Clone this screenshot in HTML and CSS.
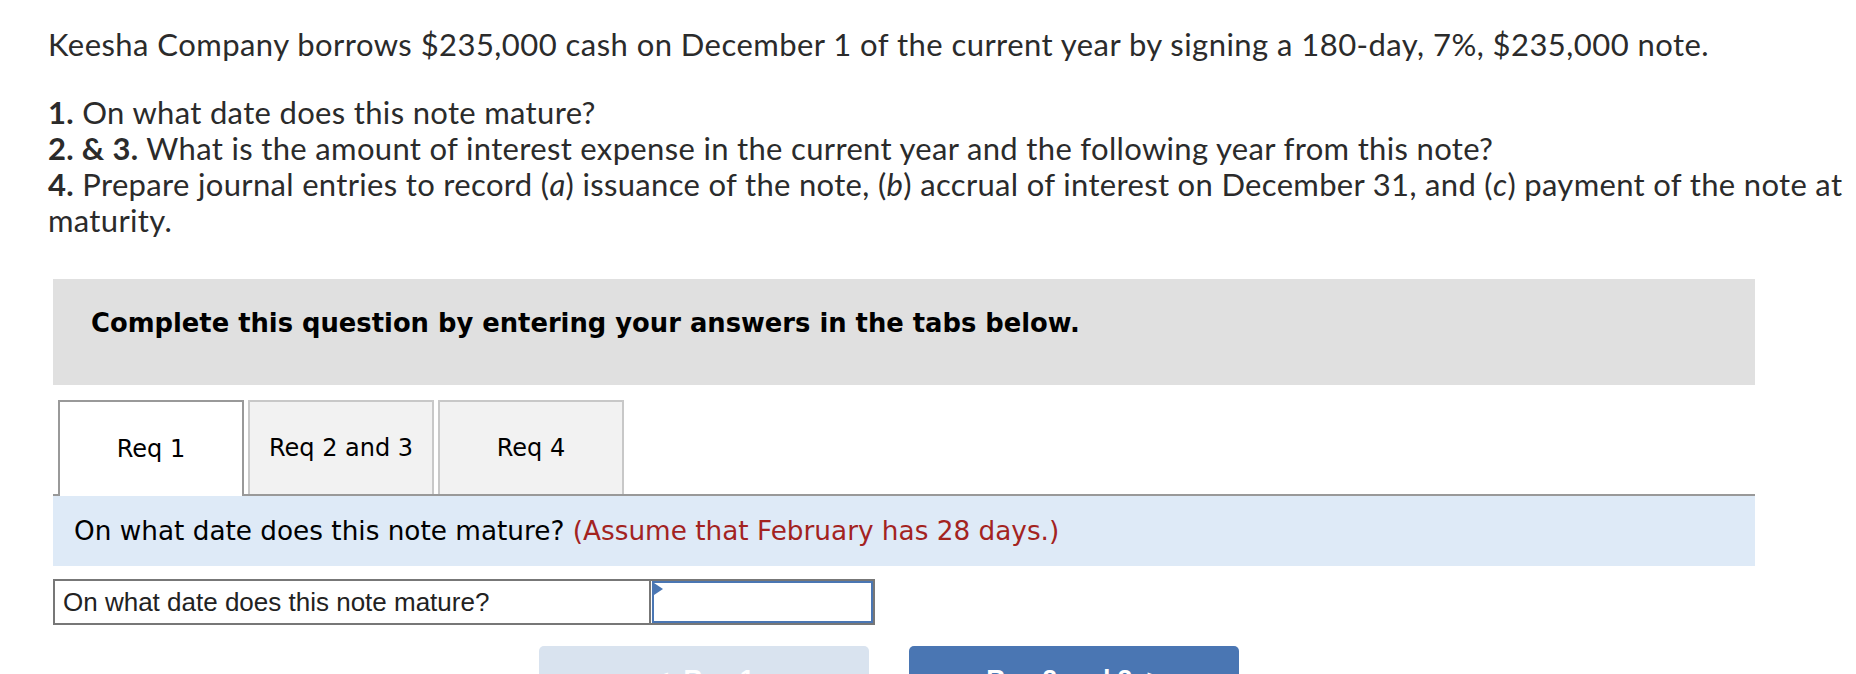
FILE: index.html
```html
<!DOCTYPE html>
<html>
<head>
<meta charset="utf-8">
<link rel="stylesheet" href="styles.css">
</head>
<body>
<div class="page">
  <div class="intro">
    <p class="lead">Keesha Company borrows $235,000 cash on December 1 of the current year by signing a 180-day, 7%, $235,000 note.</p>
    <p class="reqs"><b>1.</b> On what date does this note mature?<br><b>2. &amp; 3.</b> What is the amount of interest expense in the current year and the following year from this note?<br><b>4.</b> Prepare journal entries to record (<i>a</i>) issuance of the note, (<i>b</i>) accrual of interest on December 31, and (<i>c</i>) payment of the note at<br>maturity.</p>
  </div>
  <div class="widget">
    <div class="banner">Complete this question by entering your answers in the tabs below.</div>
    <div class="tabs">
      <div class="tab active">Req 1</div>
      <div class="tab">Req 2 and 3</div>
      <div class="tab">Req 4</div>
    </div>
    <div class="instr">On what date does this note mature? <span class="note">(Assume that February has 28 days.)</span></div>
    <div class="answer">
      <div class="label">On what date does this note mature?</div>
      <div class="input"><span class="marker"></span></div>
    </div>
    <div class="nav">
      <div class="btn prev">&lt;&nbsp;&nbsp;Req 1</div>
      <div class="btn next">Req 2 and 3&nbsp;&nbsp;&gt;</div>
    </div>
  </div>
</div>
</body>
</html>
```
FILE: styles.css
```css
html, body {
  margin: 0;
  padding: 0;
  background: #fff;
}
.page {
  overflow: hidden;
  height: 674px;
}
.intro {
  padding: 26px 0 0 48px;
  font-family: Lato, "Open Sans", sans-serif;
  font-size: 31px;
  letter-spacing: 0.45px;
  line-height: 36px;
  color: #2b2b2b;
  white-space: nowrap;
}
.intro p {
  margin: 0;
}
.intro .reqs {
  margin-top: 32px;
  letter-spacing: 0.33px;
}
.intro b {
  font-weight: 700;
}
.widget {
  margin: 41px 0 0 53px;
  width: 1702px;
}
.banner {
  box-sizing: border-box;
  height: 106px;
  background: #e0e0e0;
  padding: 28px 0 0 38px;
  font-family: "DejaVu Sans", Verdana, sans-serif;
  font-weight: bold;
  font-size: 25.8px;
  line-height: 32px;
  color: #000;
}
.tabs {
  display: flex;
  gap: 4px;
  padding-left: 5px;
  margin-top: 15px;
  border-bottom: 2px solid #999;
  height: 94px;
}
.tab {
  box-sizing: border-box;
  width: 186px;
  height: 94px;
  border: 2px solid #c8c8c8;
  border-bottom: none;
  background: #f2f2f2;
  display: flex;
  align-items: center;
  justify-content: center;
  font-family: "DejaVu Sans", Verdana, sans-serif;
  font-size: 24px;
  color: #000;
}
.tab.active {
  background: #fff;
  border-color: #999;
  height: 96px;
  position: relative;
  z-index: 1;
}
.instr {
  box-sizing: border-box;
  height: 70px;
  background: #deeaf7;
  padding-left: 21px;
  display: flex;
  align-items: center;
  font-family: "DejaVu Sans", Verdana, sans-serif;
  font-size: 26.3px;
  color: #000;
  white-space: pre;
}
.instr .note {
  color: #a3231f;
}
.answer {
  display: flex;
  margin-top: 13px;
  width: 822px;
  height: 46px;
  box-sizing: border-box;
  border: 2px solid #777;
}
.label {
  width: 596px;
  border-right: 2px solid #777;
  display: flex;
  align-items: center;
  padding-left: 8px;
  box-sizing: border-box;
  font-family: "Liberation Sans", Arial, sans-serif;
  font-size: 26px;
  color: #222;
}
.input {
  flex: 1;
  position: relative;
  border: 2px solid #4a76b3;
  margin-left: 1px;
  background: #fff;
}
.marker {
  position: absolute;
  left: 0;
  top: 0;
  width: 0;
  height: 0;
  border-top: 6px solid transparent;
  border-bottom: 6px solid transparent;
  border-left: 9px solid #4a76b3;
}
.nav {
  display: flex;
  gap: 40px;
  padding-left: 486px;
  margin-top: 21px;
}
.btn {
  box-sizing: border-box;
  width: 330px;
  height: 60px;
  border-radius: 5px;
  padding-top: 18px;
  text-align: center;
  font-family: "Liberation Sans", Arial, sans-serif;
  font-weight: bold;
  font-size: 26px;
  color: #fff;
}
.prev {
  background: #d9e3ef;
  color: #fff;
}
.next {
  background: #4a76b3;
}
```
